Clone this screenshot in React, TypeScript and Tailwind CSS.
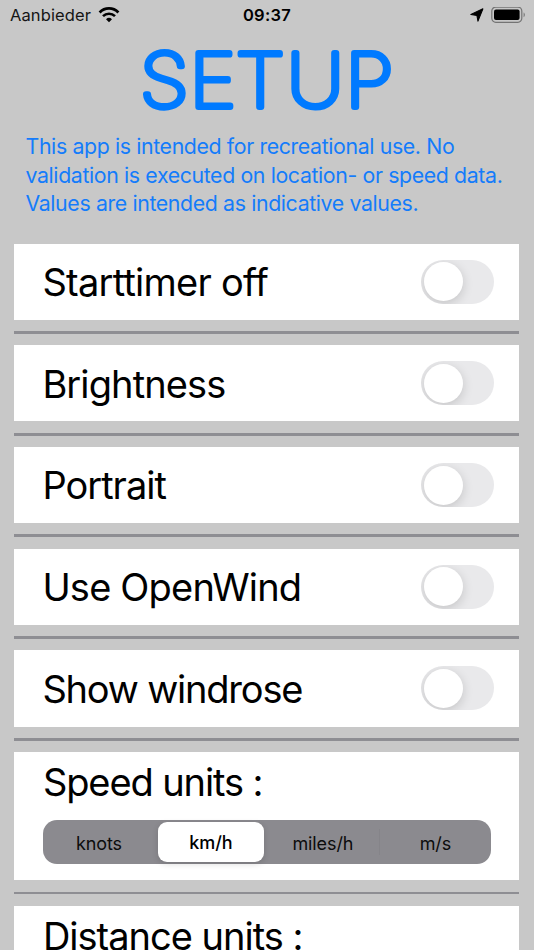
import { useState } from "react";

interface ToggleRowProps {
  label: string;
  tracking: string;
}

const toggles: ToggleRowProps[] = [
  { label: "Starttimer off", tracking: "tracking-[-0.75px]" },
  { label: "Brightness", tracking: "tracking-[-0.9px]" },
  { label: "Portrait", tracking: "tracking-[-1px]" },
  { label: "Use OpenWind", tracking: "tracking-[-0.8px]" },
  { label: "Show windrose", tracking: "tracking-[-1.2px]" },
];

const speedUnits = ["knots", "km/h", "miles/h", "m/s"];

function StatusBar() {
  return (
    <header className="grid h-[30px] shrink-0 grid-cols-3 items-center px-[10px] leading-[30px]">
      <div className="flex items-center gap-[7px]">
        <span className="text-[16.5px] tracking-[0.1px] text-[#151515]">Aanbieder</span>
        <svg className="h-[16px] w-[22px]" viewBox="0 0 22 16">
          <path d="M1.6 5.4a13.2 13.2 0 0 1 18.8 0" fill="none" stroke="#000" strokeWidth="2.8" />
          <path d="M5 9.2a8.5 8.5 0 0 1 12 0" fill="none" stroke="#000" strokeWidth="2.6" />
          <path d="M8 12.2a4.3 4.3 0 0 1 6 0L11 15.2z" fill="#000" />
        </svg>
      </div>
      <span className="text-center text-[16.5px] font-semibold tracking-[0.3px]">09:37</span>
      <div className="flex items-center justify-end gap-[7px]">
        <svg className="h-[14px] w-[14px]" viewBox="0 0 13 13">
          <path d="M12 .8 7.4 12.2 6.4 6.9.8 6z" fill="#000" stroke="#000" strokeWidth="1" strokeLinejoin="round" />
        </svg>
        <svg className="-mr-[2.4px] h-[17px] w-[35px]" viewBox="0 0 35 17">
          <rect x=".8" y=".1" width="30" height="15.2" rx="4" fill="none" stroke="#747474" strokeWidth="1.2" />
          <rect x="3" y="2.4" width="25.6" height="10.6" rx="2" fill="#000" />
          <path d="M32.6 5.5c1.6.7 1.6 4 0 4.7z" fill="#747474" />
        </svg>
      </div>
    </header>
  );
}

// wordmark with rounded stroke ends
function Title() {
  return (
    <h1 className="h-[100px] shrink-0">
      <svg className="h-[100px] w-[534px]" viewBox="0 0 534 100">
        <text
          transform="scale(1.07 1)"
          x="130.8 177.2 220.4 268 322.6"
          y="76.8"
          fontSize="74.3"
          fill="#007aff"
          stroke="#007aff"
          strokeWidth="5.9"
          strokeLinejoin="round"
          className="font-thin"
        >
          SETUP
        </text>
      </svg>
    </h1>
  );
}

function Divider() {
  return <div className="my-[11.3px] h-[2.8px] shrink-0 bg-[#8e8e93]" />;
}

function ToggleRow({ label, tracking }: ToggleRowProps) {
  const [on, setOn] = useState(false);

  return (
    <div className="flex h-[76.3px] shrink-0 items-center justify-between bg-white pr-[25.2px] pl-7">
      <span className={`pt-[0.5px] text-[38px] leading-none whitespace-nowrap ${tracking}`}>{label}</span>
      <button
        type="button"
        role="switch"
        aria-checked={on}
        aria-label={label}
        onClick={() => setOn(!on)}
        className={`flex h-[44px] w-[73px] items-center overflow-hidden rounded-full p-[3px] ${on ? "justify-end bg-[#34c759]" : "bg-[#e9e9eb]"}`}
      >
        <span className="h-[39px] w-[39px] rounded-full bg-white shadow-[0_3px_11px_rgba(0,0,0,0.16)]" />
      </button>
    </div>
  );
}

export default function App() {
  const [unit, setUnit] = useState("km/h");

  return (
    <div className="flex h-[950px] w-[534px] flex-col overflow-hidden bg-[#c8c8c8] font-['Inter',sans-serif] text-black">
      <StatusBar />
      <Title />
      <p className="h-[113.5px] shrink-0 pt-[2.4px] pl-[25.5px] text-[21.3px] leading-[28.4px] tracking-[-0.37px] whitespace-nowrap text-[#147cfb]">
        This app is intended for recreational use. No
        <br />
        validation is executed on location- or speed data.
        <br />
        Values are intended as indicative values.
      </p>

      <main className="flex flex-col pr-[14.6px] pl-[14.4px]">
        {toggles.map((toggle) => (
          <div key={toggle.label}>
            <ToggleRow {...toggle} />
            <Divider />
          </div>
        ))}

        <section className="h-[128.3px] shrink-0 bg-white px-[28.5px] pt-[8px]">
          <h2 className="text-[38px] leading-[45px] tracking-[-1.1px]">Speed units :</h2>
          <div className="mt-[15px] flex h-[44px] w-[448px] items-center rounded-[14px] bg-[#8b8a8f]">
            {speedUnits.map((item) => (
              <button
                key={item}
                type="button"
                onClick={() => setUnit(item)}
                className={`text-[18px] tracking-[-0.1px] ${item === unit ? "mx-[3px] h-[40px] w-[106px] rounded-[9px] bg-white pt-[1px] font-medium shadow-[0_2px_6px_rgba(0,0,0,0.15)]" : "h-[26px] w-[112px] pt-[1px] text-[#0c0c0c]"} ${item === "m/s" ? "border-l border-[#858489]" : ""}`}
              >
                {item}
              </button>
            ))}
          </div>
        </section>
        <Divider />
        <section className="h-[128.3px] shrink-0 bg-white px-[28.5px] pt-[8px]">
          <h2 className="text-[38px] leading-[45px] tracking-[-1px]">Distance units :</h2>
        </section>
      </main>
    </div>
  );
}
